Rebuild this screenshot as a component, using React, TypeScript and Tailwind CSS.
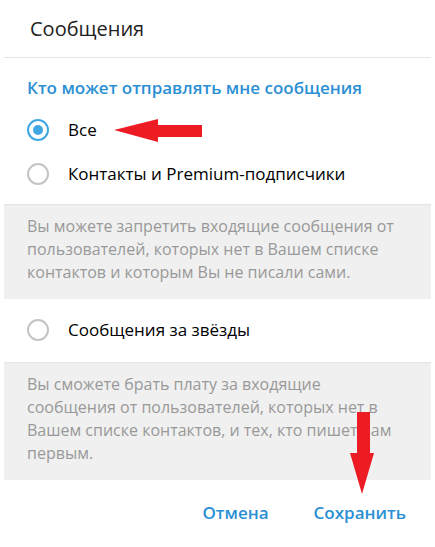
const font = { fontFamily: '"Open Sans", "Noto Sans", sans-serif' };

function Radio({ checked }: { checked?: boolean }) {
  return checked ? (
    <span className="flex h-[22px] w-[22px] items-center justify-center rounded-full border-2 border-[#40a7e3]">
      <span className="h-[10px] w-[10px] rounded-full bg-[#40a7e3]" />
    </span>
  ) : (
    <span className="h-[22px] w-[22px] rounded-full border-2 border-[#c4c4c4]" />
  );
}

function Option({ label, checked }: { label: string; checked?: boolean }) {
  return (
    <div className="flex h-[44px] items-center pl-[27px]">
      <Radio checked={checked} />
      <span className="ml-[19px] text-[17px] text-black">{label}</span>
    </div>
  );
}

function Note({ children }: { children: React.ReactNode }) {
  return (
    <div className="mx-[4px] bg-[#f0f0f0] pl-[23px] pr-[36px] pt-[11px] pb-[15px] text-[16px] leading-[23px] text-[#999] shadow-[inset_0_2px_2px_-1px_rgba(0,0,0,0.06)]">
      {children}
    </div>
  );
}

export default function App() {
  return (
    <div className="relative h-[547px] w-[435px] overflow-hidden bg-white" style={font}>
      <div className="flex h-[57px] items-center px-[30px] text-[20px] text-[#222]">Сообщения</div>
      <div className="mx-[4px] h-px bg-[#e5e5e5]" />

      <div className="px-[27px] pt-[18px] pb-[8px] text-[17px] font-semibold leading-[24px] text-[#2b8fd4]">
        Кто может отправлять мне сообщения
      </div>
      <Option label="Все" checked />
      <Option label="Контакты и Premium-подписчики" />
      <div className="h-[8px]" />
      <Note>
        Вы можете запретить входящие сообщения от пользователей, которых нет в Вашем списке контактов и которым Вы не писали сами.
      </Note>
      <div className="h-[9px]" />
      <Option label="Сообщения за звёзды" />
      <div className="h-[10px]" />
      <Note>
        Вы сможете брать плату за входящие сообщения от пользователей, которых нет в Вашем списке контактов, и тех, кто пишет вам первым.
      </Note>

      <div className="flex justify-end gap-[45px] pr-[29px] pt-[21px] text-[17px] font-semibold leading-[24px] text-[#2b8fd4]">
        <button>Отмена</button>
        <button>Сохранить</button>
      </div>

      {/* red annotation arrows */}
      <svg className="absolute left-0 top-0" width="435" height="547" viewBox="0 0 435 547">
        <polygon points="114,130 158,119 158,125 202,125 202,137 158,137 158,142" fill="#ed1c24" />
        <polygon points="357,412 370,412 370,453 374,453 362,494 350,453 357,453" fill="#ed1c24" />
      </svg>
    </div>
  );
}
